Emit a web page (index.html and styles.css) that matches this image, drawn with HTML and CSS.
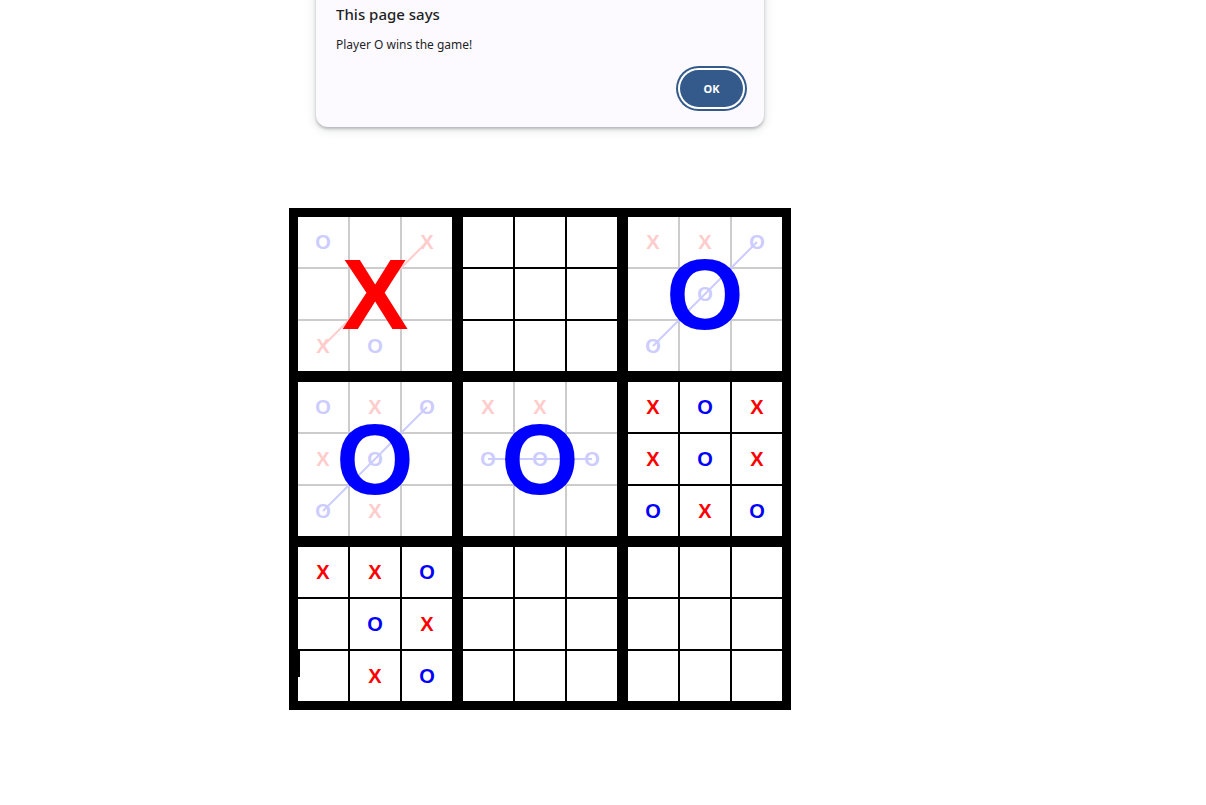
FILE: index.html
```html
<!DOCTYPE html>
<html lang="en">
<head>
<meta charset="utf-8">
<title>Ultimate Tic Tac Toe</title>
<link rel="stylesheet" href="styles.css">
</head>
<body>
<main class="page">
  <div class="board">
    <div class="sub won">
      <div class="cell o">O</div><div class="cell"></div><div class="cell x">X</div>
      <div class="cell"></div><div class="cell x">X</div><div class="cell"></div>
      <div class="cell x">X</div><div class="cell o">O</div><div class="cell"></div>
      <svg class="winline" viewBox="0 0 154 154"><line x1="25" y1="129" x2="129" y2="25" class="lx"/></svg>
      <div class="big x">X</div>
    </div>
    <div class="sub">
      <div class="cell"></div><div class="cell"></div><div class="cell"></div>
      <div class="cell"></div><div class="cell"></div><div class="cell"></div>
      <div class="cell"></div><div class="cell"></div><div class="cell"></div>
    </div>
    <div class="sub won">
      <div class="cell x">X</div><div class="cell x">X</div><div class="cell o">O</div>
      <div class="cell"></div><div class="cell o">O</div><div class="cell"></div>
      <div class="cell o">O</div><div class="cell"></div><div class="cell"></div>
      <svg class="winline" viewBox="0 0 154 154"><line x1="25" y1="129" x2="129" y2="25" class="lo"/></svg>
      <div class="big o">O</div>
    </div>
    <div class="sub won">
      <div class="cell o">O</div><div class="cell x">X</div><div class="cell o">O</div>
      <div class="cell x">X</div><div class="cell o">O</div><div class="cell"></div>
      <div class="cell o">O</div><div class="cell x">X</div><div class="cell"></div>
      <svg class="winline" viewBox="0 0 154 154"><line x1="25" y1="129" x2="129" y2="25" class="lo"/></svg>
      <div class="big o">O</div>
    </div>
    <div class="sub won">
      <div class="cell x">X</div><div class="cell x">X</div><div class="cell"></div>
      <div class="cell o">O</div><div class="cell o">O</div><div class="cell o">O</div>
      <div class="cell"></div><div class="cell"></div><div class="cell"></div>
      <svg class="winline" viewBox="0 0 154 154"><line x1="25" y1="77" x2="129" y2="77" class="lo"/></svg>
      <div class="big o">O</div>
    </div>
    <div class="sub">
      <div class="cell x">X</div><div class="cell o">O</div><div class="cell x">X</div>
      <div class="cell x">X</div><div class="cell o">O</div><div class="cell x">X</div>
      <div class="cell o">O</div><div class="cell x">X</div><div class="cell o">O</div>
    </div>
    <div class="sub">
      <div class="cell x">X</div><div class="cell x">X</div><div class="cell o">O</div>
      <div class="cell"></div><div class="cell o">O</div><div class="cell x">X</div>
      <div class="cell tick"></div><div class="cell x">X</div><div class="cell o">O</div>
    </div>
    <div class="sub">
      <div class="cell"></div><div class="cell"></div><div class="cell"></div>
      <div class="cell"></div><div class="cell"></div><div class="cell"></div>
      <div class="cell"></div><div class="cell"></div><div class="cell"></div>
    </div>
    <div class="sub">
      <div class="cell"></div><div class="cell"></div><div class="cell"></div>
      <div class="cell"></div><div class="cell"></div><div class="cell"></div>
      <div class="cell"></div><div class="cell"></div><div class="cell"></div>
    </div>
  </div>
</main>

<div class="dialog" role="alertdialog">
  <div class="dialog-title">This page says</div>
  <div class="dialog-msg">Player O wins the game!</div>
  <div class="dialog-actions"><button class="ok">OK</button></div>
</div>
</body>
</html>
```

FILE: styles.css
```css
html, body {
  margin: 0;
  padding: 0;
  background: #ffffff;
}

body {
  font-family: "Liberation Sans", Arial, sans-serif;
}

.page {
  width: 1080px;
  padding-top: 208px;
  display: flex;
  justify-content: center;
}

.board {
  display: grid;
  grid-template-columns: repeat(3, 156px);
  grid-template-rows: repeat(3, 156px);
  gap: 9px;
  padding: 8px;
  background: #000;
}

.sub {
  position: relative;
  display: grid;
  grid-template-columns: repeat(3, 50px);
  grid-template-rows: repeat(3, 50px);
  gap: 2px;
  border: 1px solid #000;
  background: #000;
}

.sub.won {
  background: #cccccc;
}

.cell {
  position: relative;
  background: #fff;
  display: flex;
  align-items: center;
  justify-content: center;
  font-size: 20px;
  font-weight: bold;
  line-height: 1;
}

.x { color: #ff0000; }
.o { color: #0000ff; }

.won .cell.x { color: #ffcccc; }
.won .cell.o { color: #ccccff; }

.cell.tick::before {
  content: "";
  position: absolute;
  left: 0;
  top: 0;
  width: 2px;
  height: 26px;
  background: #000;
}

.winline {
  position: absolute;
  left: 0;
  top: 0;
  width: 154px;
  height: 154px;
}

.winline line {
  stroke-width: 2;
}

.winline .lx { stroke: #ffcccc; }
.winline .lo { stroke: #ccccff; }

.big {
  position: absolute;
  inset: 0;
  display: flex;
  align-items: center;
  justify-content: center;
  font-size: 100px;
  font-weight: bold;
  line-height: 1;
}

/* alert dialog */
.dialog {
  position: absolute;
  left: 316px;
  top: -20px;
  width: 448px;
  box-sizing: border-box;
  padding: 24px 21px 20px 20px;
  background: #fcfaff;
  border-radius: 12px;
  box-shadow: 0 2px 3px rgba(60, 64, 67, 0.3), 0 2px 8px 2px rgba(60, 64, 67, 0.12);
  font-family: "Noto Sans", "Open Sans", sans-serif;
  color: #1f1f1f;
}

.dialog-title {
  font-size: 15px;
  line-height: 20px;
  font-weight: 500;
}

.dialog-msg {
  margin-top: 13px;
  font-size: 12px;
  line-height: 16px;
}

.dialog-actions {
  margin-top: 17px;
  display: flex;
  justify-content: flex-end;
}

.ok {
  width: 63px;
  height: 37px;
  border: none;
  border-radius: 999px;
  background: #345a8b;
  color: #fff;
  font-family: "Noto Sans", "Open Sans", sans-serif;
  font-size: 11px;
  font-weight: bold;
  box-shadow: 0 0 0 2px #fff, 0 0 0 4px #345a8b;
  padding: 0;
}
```
